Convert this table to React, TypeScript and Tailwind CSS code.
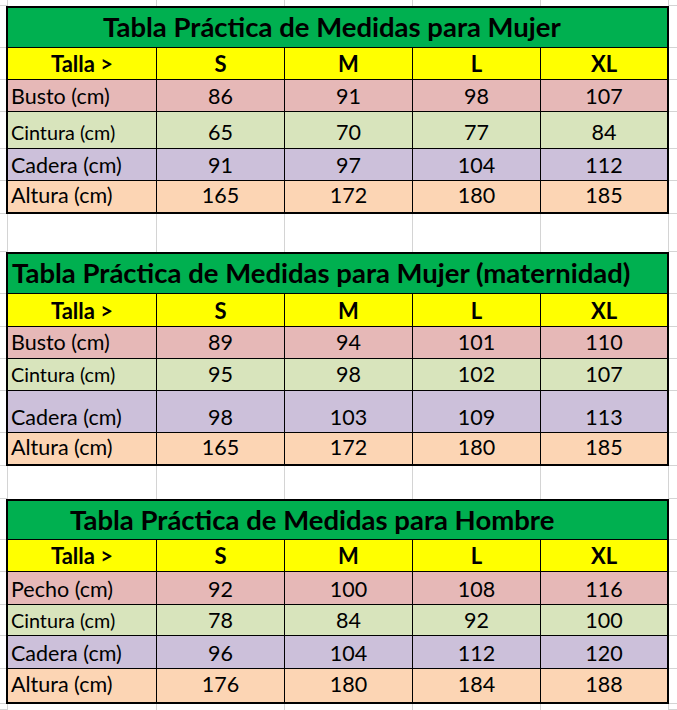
const sizes = ["S", "M", "L", "XL"];

type DataRow = {
  label: string;
  values: string[];
  bg: string;
  h: string;
  pb: string;
  small?: boolean;
};

type Table = {
  title: string;
  titleH: string;
  titlePad: string;
  headerH: string;
  headerPb: string;
  rows: DataRow[];
};

const tables: Table[] = [
  {
    title: "Tabla Práctica de Medidas para Mujer",
    titleH: "h-[42px]",
    titlePad: "pl-[95px] pb-[7px]",
    headerH: "h-[32px]",
    headerPb: "pb-[4px]",
    rows: [
      { label: "Busto (cm)", values: ["86", "91", "98", "107"], bg: "bg-[#e6b8b7]", h: "h-[32px]", pb: "pb-[4px]" },
      { label: "Cintura (cm)", values: ["65", "70", "77", "84"], bg: "bg-[#d8e4bc]", h: "h-[37px]", pb: "pb-[5px]", small: true },
      { label: "Cadera (cm)", values: ["91", "97", "104", "112"], bg: "bg-[#ccc0da]", h: "h-[32px]", pb: "pb-[4px]" },
      { label: "Altura (cm)", values: ["165", "172", "180", "185"], bg: "bg-[#fcd5b4]", h: "h-[33px]", pb: "pb-[6px]" },
    ],
  },
  {
    title: "Tabla Práctica de Medidas para Mujer (maternidad)",
    titleH: "h-[42px]",
    titlePad: "pl-[4px] pb-[7px]",
    headerH: "h-[33px]",
    headerPb: "pb-[4px]",
    rows: [
      { label: "Busto (cm)", values: ["89", "94", "101", "110"], bg: "bg-[#e6b8b7]", h: "h-[32px]", pb: "pb-[5px]" },
      { label: "Cintura (cm)", values: ["95", "98", "102", "107"], bg: "bg-[#d8e4bc]", h: "h-[32px]", pb: "pb-[5px]", small: true },
      { label: "Cadera (cm)", values: ["98", "103", "109", "113"], bg: "bg-[#ccc0da]", h: "h-[42px]", pb: "pb-[4px]" },
      { label: "Altura (cm)", values: ["165", "172", "180", "185"], bg: "bg-[#fcd5b4]", h: "h-[33px]", pb: "pb-[6px]" },
    ],
  },
  {
    title: "Tabla Práctica de Medidas para Hombre",
    titleH: "h-[41px]",
    titlePad: "pl-[62px] pb-[6px]",
    headerH: "h-[32px]",
    headerPb: "pb-[4px]",
    rows: [
      { label: "Pecho (cm)", values: ["92", "100", "108", "116"], bg: "bg-[#e6b8b7]", h: "h-[33px]", pb: "pb-[4px]" },
      { label: "Cintura (cm)", values: ["78", "84", "92", "100"], bg: "bg-[#d8e4bc]", h: "h-[31px]", pb: "pb-[4px]", small: true },
      { label: "Cadera (cm)", values: ["96", "104", "112", "120"], bg: "bg-[#ccc0da]", h: "h-[33px]", pb: "pb-[4px]" },
      { label: "Altura (cm)", values: ["176", "180", "184", "188"], bg: "bg-[#fcd5b4]", h: "h-[35px]", pb: "pb-[7px]" },
    ],
  },
];

function SheetRow({ h, children }: { h: string; children: React.ReactNode }) {
  return (
    <div className={`flex ${h}`}>
      <div className="w-[6px] shrink-0 border-b border-[#d4d4d4]" />
      {children}
      <div className="flex-1 border-b border-[#d4d4d4]" />
    </div>
  );
}

function GapRow({ h }: { h: string }) {
  return (
    <div className={`flex ${h}`}>
      <div className="w-[7px] shrink-0 border-b border-[#d4d4d4]" />
      <div className="w-[150px] shrink-0 border-x border-[#d4d4d4]" />
      <div className="w-[128px] shrink-0 border-r border-[#d4d4d4]" />
      <div className="w-[128px] shrink-0 border-r border-[#d4d4d4]" />
      <div className="w-[128px] shrink-0 border-r border-[#d4d4d4]" />
      <div className="w-[128px] shrink-0 border-r border-[#d4d4d4]" />
      <div className="flex-1 border-b border-[#d4d4d4]" />
    </div>
  );
}

function Cells({
  first,
  values,
  bg,
  pb,
  last,
  bold,
  small,
}: {
  first: string;
  values: string[];
  bg: string;
  pb: string;
  last?: boolean;
  bold?: boolean;
  small?: boolean;
}) {
  const bottom = last ? "border-b-2" : "border-b";
  const text = bold ? "text-[22px] font-bold" : "text-[21.5px]";
  return (
    <>
      <div
        className={`flex w-[151px] shrink-0 items-end border-l-2 border-r border-black ${bottom} ${bg} ${pb} ${
          bold ? "justify-center" : "pl-[3px]"
        }`}
      >
        <span className={`leading-none ${bold ? text : small ? "text-[19.8px]" : "text-[21.5px]"}`}>{first}</span>
      </div>
      {values.map((v, i) => (
        <div
          key={i}
          className={`flex w-[128px] shrink-0 items-end justify-center border-black ${bottom} ${
            i === 3 ? "border-r-2" : "border-r"
          } ${bg} ${pb}`}
        >
          <span className={`leading-none ${text}`}>{v}</span>
        </div>
      ))}
    </>
  );
}

function SizeTable({ table }: { table: Table }) {
  return (
    <>
      <SheetRow h={table.titleH}>
        <div
          className={`flex w-[663px] shrink-0 items-end border-x-2 border-t-2 border-b border-black bg-[#00b050] ${table.titlePad}`}
        >
          <span className="text-[27.5px] font-bold leading-none">{table.title}</span>
        </div>
      </SheetRow>
      <SheetRow h={table.headerH}>
        <Cells first="Talla >" values={sizes} bg="bg-[#ffff00]" pb={table.headerPb} bold />
      </SheetRow>
      {table.rows.map((r, i) => (
        <SheetRow key={r.label} h={r.h}>
          <Cells
            first={r.label}
            values={r.values}
            bg={r.bg}
            pb={r.pb}
            small={r.small}
            last={i === table.rows.length - 1}
          />
        </SheetRow>
      ))}
    </>
  );
}

export default function App() {
  return (
    <div className="h-[710px] w-[677px] overflow-hidden bg-white font-['Lato',sans-serif] text-black">
      <GapRow h="h-[6px]" />
      <SizeTable table={tables[0]} />
      <GapRow h="h-[38px]" />
      <SizeTable table={tables[1]} />
      <GapRow h="h-[33px]" />
      <SizeTable table={tables[2]} />
      <GapRow h="h-[6px]" />
    </div>
  );
}
